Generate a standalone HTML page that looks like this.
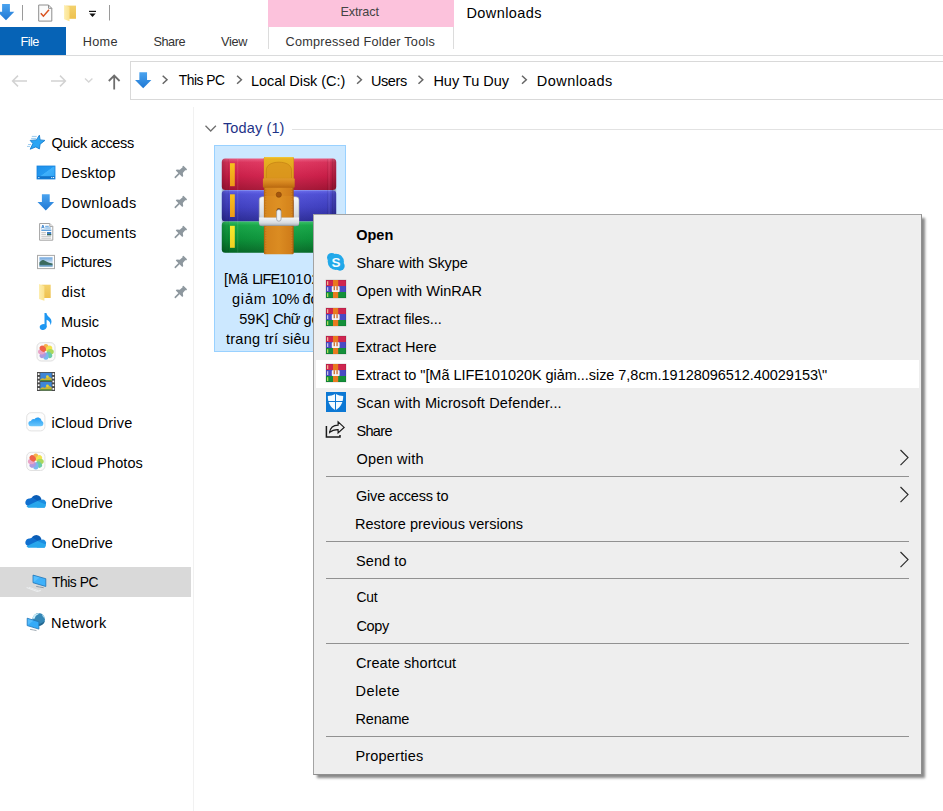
<!DOCTYPE html>
<html lang="en">
<head>
<meta charset="utf-8">
<title>Downloads</title>
<style>
*{box-sizing:border-box;margin:0;padding:0}
html,body{width:943px;height:811px;overflow:hidden;background:#fff}
body{font-family:"Liberation Sans",sans-serif;font-size:15px;color:#000;position:relative}
.a{position:absolute}
.t{position:absolute;white-space:nowrap;line-height:20px;height:20px}
svg{position:absolute;overflow:visible}
#pink{left:268px;top:0;width:186px;height:27px;background:#fcc2dc}
#filetab{left:0;top:27px;width:66px;height:28px;background:#0663b6}
#ribline{left:0;top:55px;width:943px;height:1px;background:#dadbdc}
#ctab{left:268px;top:27px;width:186px;height:22px;border-left:1px solid #dcdcdc;border-right:1px solid #dcdcdc;background:#fff}
#addr{left:130px;top:61px;width:830px;height:39px;border:1px solid #d9d9d9;background:#fff}
#navsel{left:0;top:567px;width:191px;height:30px;background:#d9d9d9}
#navdiv{left:193px;top:107px;width:1px;height:704px;background:#f1f1f1}
#grpline{left:292px;top:129px;width:651px;height:1px;background:#e2e2e2}
#sel{left:214px;top:145px;width:132px;height:207px;background:#cce8ff;border:1px solid #99d1ff}
#menu{left:313px;top:214px;width:609px;height:561px;background:#eeeeee;border:1px solid #a3a3a3;border-right-color:#8f8f8f;border-bottom-color:#8f8f8f;box-shadow:3px 3.5px 2.5px -.5px rgba(0,0,0,.47)}
#hl{left:316px;top:360px;width:603px;height:28px;background:#fff}
.sep{position:absolute;left:326px;width:583px;height:1px;background:#919191}
</style>
</head>
<body>
<div class="a" id="pink"></div>
<div class="a" id="ctab"></div>
<div class="a" id="filetab"></div>
<div class="a" id="ribline"></div>
<div class="a" id="addr"></div>
<div class="a" id="navsel"></div>
<div class="a" id="navdiv"></div>
<div class="a" id="grpline"></div>
<div class="a" id="sel"></div>

<!-- texts -->
<div class="t" style="left:340.4px;top:1.6px;font-size:12.7px;letter-spacing:-0.143px;color:#444">Extract</div>
<div class="t" style="left:466.4px;top:2.98px;font-size:14.5px;letter-spacing:0.427px;color:#000">Downloads</div>
<div class="t" style="left:20.5px;top:31.6px;font-size:12.7px;letter-spacing:-0.529px;color:#fff">File</div>
<div class="t" style="left:82.7px;top:31.6px;font-size:12.7px;letter-spacing:0.338px;color:#333">Home</div>
<div class="t" style="left:153.4px;top:31.6px;font-size:12.7px;letter-spacing:-0.425px;color:#333">Share</div>
<div class="t" style="left:220.9px;top:31.6px;font-size:12.7px;letter-spacing:-0.236px;color:#333">View</div>
<div class="t" style="left:285.6px;top:31.6px;font-size:12.7px;letter-spacing:0.222px;color:#333">Compressed Folder Tools</div>
<div class="t" style="left:178.8px;top:71.02px;font-size:13.8px;letter-spacing:-0.471px;color:#000">This PC</div>
<div class="t" style="left:251px;top:70.78px;font-size:14.5px;letter-spacing:-0.06px;color:#000">Local Disk (C:)</div>
<div class="t" style="left:371px;top:70.78px;font-size:14.5px;letter-spacing:-0.429px;color:#000">Users</div>
<div class="t" style="left:433.4px;top:70.78px;font-size:14.5px;letter-spacing:-0.018px;color:#000">Huy Tu Duy</div>
<div class="t" style="left:536.8px;top:70.78px;font-size:14.5px;letter-spacing:0.452px;color:#000">Downloads</div>
<div class="t" style="left:51.5px;top:132.68px;font-size:14.5px;letter-spacing:-0.316px;color:#000">Quick access</div>
<div class="t" style="left:61px;top:162.58px;font-size:14.5px;letter-spacing:0.212px;color:#000">Desktop</div>
<div class="t" style="left:61px;top:192.58px;font-size:14.5px;letter-spacing:0.427px;color:#000">Downloads</div>
<div class="t" style="left:61px;top:222.58px;font-size:14.5px;letter-spacing:0.227px;color:#000">Documents</div>
<div class="t" style="left:61px;top:252.48px;font-size:14.5px;letter-spacing:-0.218px;color:#000">Pictures</div>
<div class="t" style="left:61.4px;top:282.48px;font-size:14.5px;letter-spacing:0.321px;color:#000">dist</div>
<div class="t" style="left:61px;top:312.48px;font-size:14.5px;letter-spacing:0.046px;color:#000">Music</div>
<div class="t" style="left:61px;top:342.48px;font-size:14.5px;letter-spacing:0.001px;color:#000">Photos</div>
<div class="t" style="left:61.5px;top:372.48px;font-size:14.5px;letter-spacing:0.115px;color:#000">Videos</div>
<div class="t" style="left:51.4px;top:412.58px;font-size:14.5px;letter-spacing:0.172px;color:#000">iCloud Drive</div>
<div class="t" style="left:51.4px;top:452.58px;font-size:14.5px;letter-spacing:0.098px;color:#000">iCloud Photos</div>
<div class="t" style="left:51.4px;top:492.58px;font-size:14.5px;letter-spacing:0.017px;color:#000">OneDrive</div>
<div class="t" style="left:51.4px;top:532.58px;font-size:14.5px;letter-spacing:0.017px;color:#000">OneDrive</div>
<div class="t" style="left:52.0px;top:572.82px;font-size:13.8px;letter-spacing:-0.454px;color:#000">This PC</div>
<div class="t" style="left:51px;top:612.58px;font-size:14.5px;letter-spacing:0.345px;color:#000">Network</div>
<div class="t" style="left:223px;top:118.28px;font-size:14.5px;letter-spacing:0.123px;color:#1e3287">Today (1)</div>
<!-- shared defs -->
<svg width="0" height="0" style="left:0px;top:0px">
<defs>
<linearGradient id="gArrow" x1="0" y1="0" x2="0" y2="1"><stop offset="0" stop-color="#4aa3ef"/><stop offset="1" stop-color="#1f78d4"/></linearGradient>
<linearGradient id="gFolderB" x1="0" y1="0" x2="0" y2="1"><stop offset="0" stop-color="#f3d16d"/><stop offset="1" stop-color="#eec14f"/></linearGradient>
<linearGradient id="gFolderF" x1="0" y1="0" x2="1" y2="0"><stop offset="0" stop-color="#fdeeb0"/><stop offset="1" stop-color="#fbe28d"/></linearGradient>
<linearGradient id="gDesk" x1="0" y1="0" x2="1" y2="1"><stop offset="0" stop-color="#1f90ea"/><stop offset=".47" stop-color="#2399f0"/><stop offset=".5" stop-color="#3fb0fb"/><stop offset="1" stop-color="#2fa2f4"/></linearGradient>
<linearGradient id="gCloud" x1="0" y1="0" x2="0" y2="1"><stop offset="0" stop-color="#1f9af3"/><stop offset="1" stop-color="#6cc7fb"/></linearGradient>
<linearGradient id="gSky" x1="0" y1="0" x2="0" y2="1"><stop offset="0" stop-color="#6fa6de"/><stop offset=".6" stop-color="#d3e4f4"/><stop offset="1" stop-color="#e6eff8"/></linearGradient>
<g id="pin" fill="#8d979e"><g transform="rotate(45)"><rect x="-2.7" y="-8.4" width="5.4" height="1.7" rx=".5"/><path d="M-1.9-7h3.8l.3 4.2 2.4 1.9v1.3h-9.2v-1.3l2.4-1.9z"/><rect x="-.8" y="0" width="1.6" height="6.4" rx=".7"/></g></g>
<g id="dlarrow"><path d="M-3.9-8.1h7.8v7.7h4.4L0 8.1-8.3-.4h4.4z" fill="url(#gArrow)"/></g>
<g id="chev" fill="none" stroke="#666" stroke-width="1.5"><path d="M-2.5-4l4.3 4-4.3 4"/></g>
<g id="flower">
 <g opacity=".9">
 <ellipse cx="0" cy="-4.400" rx="2.700" ry="3.500" fill="#f5aa3c"/>
 <ellipse cx="0" cy="-4.400" rx="2.700" ry="3.500" fill="#f2e03c" transform="rotate(45)"/>
 <ellipse cx="0" cy="-4.400" rx="2.700" ry="3.500" fill="#a3d64c" transform="rotate(90)"/>
 <ellipse cx="0" cy="-4.400" rx="2.700" ry="3.500" fill="#5cc79f" transform="rotate(135)"/>
 <ellipse cx="0" cy="-4.400" rx="2.700" ry="3.500" fill="#6cb2ee" transform="rotate(180)"/>
 <ellipse cx="0" cy="-4.400" rx="2.700" ry="3.500" fill="#a88fdc" transform="rotate(225)"/>
 <ellipse cx="0" cy="-4.400" rx="2.700" ry="3.500" fill="#e79ac2" transform="rotate(270)"/>
 <ellipse cx="0" cy="-4.400" rx="2.700" ry="3.500" fill="#ee5236" transform="rotate(315)"/>
 </g>
</g>
<g id="onedrive">
 <circle cx="36.3" cy="500.1" r="5.2" fill="#0b5db6"/>
 <path d="M29.800 498.500a3.800 3.800 0 0 0-2.200 7.200l1.400 1.900 8.400-6.900-4.900-3.100z" fill="#106fcf"/>
 <path d="M37.400 500.700l4-.9a3.500 3.500 0 0 1 4.400 4.800l-1 3h-8z" fill="#1b8de0"/>
 <path d="M37.400 500.900l8.300 3.500c.4 1.900-.8 3.400-2.500 3.400h-14c-1.200 0-2.200-.6-2.700-1.500z" fill="#29a7ec"/>
</g>
</defs>
</svg>
<!-- quick access toolbar -->
<svg style="left:0px;top:0px" width="120" height="27">
 <use href="#dlarrow" transform="translate(6,12.2)"/>
 <rect x="22" y="5" width="1" height="15.5" fill="#9a9a9a"/>
 <rect x="109" y="5" width="1" height="15.5" fill="#9a9a9a"/>
 <path d="M38.7 5h9.8l3.3 3.3v12.8h-13.1z" fill="#fbfbfb" stroke="#8e8e8e" stroke-width="1"/>
 <path d="M48.5 5v3.3h3.3" fill="none" stroke="#8e8e8e" stroke-width="1"/>
 <path d="M40.8 13.2l2.6 3 5.6-6.4" fill="none" stroke="#d9521f" stroke-width="1.5"/>
 <path d="M66.2 5.6h9.8v13.2h-9.8z" fill="url(#gFolderB)"/>
 <path d="M64.1 5l5.4 1.8v14.4l-5.4-1.9z" fill="url(#gFolderF)"/>
 <rect x="89" y="10.8" width="7" height="1.2" fill="#111"/>
 <path d="M89.3 13.5h6.4l-3.2 3.4z" fill="#111"/>
</svg>
<!-- nav buttons -->
<svg style="left:0px;top:60px" width="180" height="40" fill="none">
 <path d="M27 21H12.6M18 15.6 12.6 21l5.4 5.4" stroke="#d2d2d2" stroke-width="1.5"/>
 <path d="M51 21h14.4M60 15.6l5.4 5.4-5.4 5.4" stroke="#d2d2d2" stroke-width="1.5"/>
 <path d="M85 18.4l3.7 3.6 3.7-3.6" stroke="#d6d6d6" stroke-width="1.4"/>
 <path d="M114.2 29.5V15.6M108.8 21l5.4-5.4 5.4 5.4" stroke="#6e6e6e" stroke-width="1.8"/>
 <use href="#dlarrow" transform="translate(143.2,20.3) scale(.985)"/>
 <use href="#chev" transform="translate(165.2,19.8)"/>
 <use href="#chev" transform="translate(239.6,19.8)"/>
 <use href="#chev" transform="translate(359.6,19.8)"/>
 <use href="#chev" transform="translate(421,19.8)"/>
 <use href="#chev" transform="translate(524.5,19.8)"/>
</svg>
<!-- nav pane icons -->
<svg style="left:0px;top:100px" width="192" height="560" viewBox="0 100 192 560">
 <!-- pins -->
 <use href="#pin" transform="translate(179.3,173.4)"/>
 <use href="#pin" transform="translate(179.3,203.4)"/>
 <use href="#pin" transform="translate(179.3,233.4)"/>
 <use href="#pin" transform="translate(179.3,263.4)"/>
 <use href="#pin" transform="translate(179.3,293.4)"/>
 <!-- quick access star -->
 <path d="M39.4 135.2 40.1 139.9 44.9 140.4 40.1 144.2 39.4 148.9 35.8 146.9 30.2 149.2 32.9 143.6 30.2 140.4 36.4 139.9z" fill="#2aa5f4" stroke="#1a7fcf" stroke-width=".9" stroke-linejoin="round"/>
 <path d="M31.8 136.4h4.9M31.1 138.4h4.9M28.100 144.500h3M27 146.400h3" stroke="#9ccbee" stroke-width="1" fill="none"/>
 <!-- desktop -->
 <rect x="37" y="166" width="18" height="13" fill="url(#gDesk)"/>
 <rect x="37" y="176.2" width="18" height="2.8" fill="#1273c9"/>
 <rect x="37" y="166" width="18" height="13" fill="none" stroke="#1680dc" stroke-width=".8"/>
 <rect x="38.3" y="177" width="1.1" height="1.1" fill="#e8f4ff"/><rect x="51.2" y="177" width="1.1" height="1.1" fill="#e8f4ff"/><rect x="53" y="177" width="1.1" height="1.1" fill="#e8f4ff"/>
 <!-- downloads -->
 <use href="#dlarrow" transform="translate(45.8,202.4)"/>
 <!-- documents -->
 <path d="M39.6 223.5h10.2l3 3v13.7h-13.2z" fill="#fdfdfd" stroke="#a3a3a3" stroke-width="1"/>
 <path d="M49.8 223.5v3h3" fill="#e9e9e9" stroke="#a3a3a3" stroke-width=".9"/>
 <path d="M41.6 228.4l1.3-3.4 1.3 3.4M42 227.3h1.8" stroke="#2a78c8" stroke-width=".8" fill="none"/>
 <path d="M45.2 226.3h3.6M45.2 228h5.6" stroke="#4a97dc" stroke-width=".9"/>
 <path d="M41.3 230.2h10" stroke="#2f83d2" stroke-width="1.1"/>
 <path d="M41.3 232.6h4.6M41.3 234.4h4.6M41.3 236.3h9.8M41.3 238.2h9.8" stroke="#b4b4b4" stroke-width=".8"/>
 <rect x="47" y="232" width="4.2" height="3.2" fill="#3d7fc1"/><rect x="47" y="234" width="4.2" height="1.2" fill="#3f6a52"/>
 <!-- pictures -->
 <rect x="37.5" y="255.4" width="17" height="13.2" fill="#fdfdfd" stroke="#a9a9a9" stroke-width="1"/>
 <rect x="39.4" y="257.3" width="13.2" height="9.4" fill="url(#gSky)"/>
 <path d="M39.400 262.600c1.600-2.300 3-3 4.600-2.300 2.600 1.300 5 2.700 8.600 3.300v1.700h-13.200z" fill="#3b6a5e"/>
 <rect x="39.400" y="264.900" width="13.200" height="1.800" fill="#6a9cc0"/>
 <!-- dist folder -->
 <path d="M41.4 284.7h9.3v13.3h-9.3z" fill="url(#gFolderB)"/>
 <path d="M39 284.1l5.4 1.8v14.9L39 298.9z" fill="url(#gFolderF)"/>
 <!-- music -->
 <path d="M44.500 313h1.900c.500 2.200 1.900 3.400 3.400 4.800 2 1.900 2.300 4.800.500 7.500.300-2.700-.700-4.600-3.700-5.600v7.400h-2.100z" fill="#1e97f2"/>
 <ellipse cx="43.200" cy="327" rx="3.500" ry="2.800" fill="#1e97f2" transform="rotate(-20 43.200 327)"/>
 <!-- photos -->
 <rect x="37" y="342.700" width="18" height="18.300" rx="4.200" fill="#fafafa" stroke="#dedede" stroke-width="1"/>
 <use href="#flower" transform="translate(45.900,351.800)"/>
 <!-- videos -->
 <rect x="37" y="372" width="18" height="19" fill="#4a4a4a"/>
 <rect x="40.3" y="372.8" width="11.4" height="8.3" fill="#3d86d8"/>
 <rect x="40.3" y="382" width="11.4" height="8.3" fill="#3d86d8"/>
 <path d="M40.3 379.3c2-1.5 3-1.4 4.7-.4 1.6-2.8 4.2-3 6.7-.5v2.7h-11.4z" fill="#c9b437"/>
 <path d="M40.3 388.5c2-1.5 3-1.4 4.7-.4 1.6-2.8 4.2-3 6.7-.5v2.7h-11.4z" fill="#c9b437"/>
 <rect x="40.3" y="380" width="11.4" height="1.1" fill="#4c8a3a"/><rect x="40.3" y="389.2" width="11.4" height="1.1" fill="#4c8a3a"/>
 <circle cx="47.4" cy="376.6" r="1.4" fill="#e0d23a"/><circle cx="47.4" cy="385.8" r="1.4" fill="#e0d23a"/>
 <g fill="#fff"><rect x="37.8" y="373.2" width="1.7" height="1.8"/><rect x="37.8" y="376.9" width="1.7" height="1.8"/><rect x="37.8" y="380.6" width="1.7" height="1.8"/><rect x="37.8" y="384.3" width="1.7" height="1.8"/><rect x="37.8" y="388" width="1.7" height="1.8"/>
 <rect x="52.5" y="373.2" width="1.7" height="1.8"/><rect x="52.5" y="376.9" width="1.7" height="1.8"/><rect x="52.5" y="380.6" width="1.7" height="1.8"/><rect x="52.5" y="384.3" width="1.7" height="1.8"/><rect x="52.5" y="388" width="1.7" height="1.8"/></g>
 <!-- icloud drive -->
 <rect x="26.7" y="412.7" width="18.2" height="18.2" rx="4.4" fill="#fdfdfd" stroke="#e3e3e3" stroke-width="1"/>
 <path d="M31.2 426.3a2.7 2.7 0 0 1-.3-5.4 3 3 0 0 1 3.4-1.7 4.1 4.1 0 0 1 7.4 1.9 2.7 2.7 0 0 1-.7 5.2z" fill="url(#gCloud)"/>
 <!-- icloud photos -->
 <rect x="26.7" y="452.3" width="18.2" height="18.2" rx="4.4" fill="#fbfbfb" stroke="#e1e1e1" stroke-width="1"/>
 <use href="#flower" transform="translate(35.800,461.500)"/>
 <!-- onedrive x2 -->
 <use href="#onedrive"/>
 <use href="#onedrive" transform="translate(0,40)"/>
 <!-- this pc -->
 <path d="M33 575.100l12.800 3.600v7.800l-12.800-3.800z" fill="#3fb1fa" stroke="#1f74b6" stroke-width=".8" stroke-linejoin="round"/>
 <path d="M33.600 575.900l6 1.700-6 4.600z" fill="#63c3fd" fill-opacity=".7"/>
 <path d="M36.200 586.400l3.200.6 4.300.700" stroke="#8794a0" stroke-width=".9" fill="none"/>
 <path d="M26.600 587.600l10.600 3.900 3.600-1.100" stroke="#eceeef" stroke-width="1.100" fill="none"/>
 <path d="M29 587.300l9 3.200" stroke="#e9ebed" stroke-width="1" fill="none"/>
 <!-- network -->
 <circle cx="38.700" cy="619.400" r="6.300" fill="#3587b6"/>
 <path d="M44.800 621a6.300 6.300 0 0 1-10 3.600c4 .2 8-1.600 10-3.600z" fill="#25668e"/>
 <path d="M33.200 616.300c1.500-2.300 3.900-3.400 6.500-3.100-1.300 1.300-2.900 1.500-3.900 2.900-.7 1.100-.7 2.300-1.900 3.200-.9-.7-1.200-1.800-.7-3z" fill="#c9ecf8"/>
 <path d="M42.300 614.700c1.400.9 2.300 2.300 2.600 3.900-.9-.3-1.300-1.200-1.900-2-.5-.6-.9-1.100-.7-1.900z" fill="#bfe6f5"/>
 <path d="M27.200 618.200l11.700 3.600v7.300l-11.700-3.500z" fill="#36abf8" stroke="#1f74b6" stroke-width=".8" stroke-linejoin="round"/>
 <path d="M27.800 619l5.600 1.700-5.600 4.200z" fill="#63c3fd" fill-opacity=".7"/>
 <path d="M30.100 629.400l3 .5 3.400.7" stroke="#9aa5ae" stroke-width=".9" fill="none"/>
</svg>
<!-- group header chevron -->
<svg style="left:200px;top:120px" width="20" height="16"><path d="M5.500 5.800l5.200 5.200 5.200-5.200" fill="none" stroke="#6f6f6f" stroke-width="1.300"/></svg>
<!-- big winrar icon -->
<svg style="left:214px;top:150px" width="132" height="110" viewBox="214 150 132 110">
<defs>
<linearGradient id="bR" x1="0" y1="0" x2="0" y2="1"><stop offset="0" stop-color="#f05f86"/><stop offset=".12" stop-color="#e2345f"/><stop offset=".55" stop-color="#d21f4b"/><stop offset="1" stop-color="#a81536"/></linearGradient>
<linearGradient id="bB" x1="0" y1="0" x2="0" y2="1"><stop offset="0" stop-color="#6a6cf0"/><stop offset=".12" stop-color="#5152dc"/><stop offset=".55" stop-color="#4141c6"/><stop offset="1" stop-color="#2b2b98"/></linearGradient>
<linearGradient id="bG" x1="0" y1="0" x2="0" y2="1"><stop offset="0" stop-color="#35c266"/><stop offset=".12" stop-color="#16aa49"/><stop offset=".55" stop-color="#0a9539"/><stop offset="1" stop-color="#056a26"/></linearGradient>
<linearGradient id="bEnd" x1="0" y1="0" x2="1" y2="0"><stop offset="0" stop-color="#000" stop-opacity=".22"/><stop offset=".06" stop-color="#000" stop-opacity=".05"/><stop offset=".5" stop-color="#fff" stop-opacity=".04"/><stop offset=".94" stop-color="#000" stop-opacity=".05"/><stop offset="1" stop-color="#000" stop-opacity=".25"/></linearGradient>
<linearGradient id="belt" x1="0" y1="0" x2="1" y2="0"><stop offset="0" stop-color="#b2620e"/><stop offset=".1" stop-color="#d4831d"/><stop offset=".5" stop-color="#db8c22"/><stop offset=".9" stop-color="#d07d1a"/><stop offset="1" stop-color="#a8590b"/></linearGradient>
<linearGradient id="beltTop" x1="0" y1="0" x2="0" y2="1"><stop offset="0" stop-color="#f3cb3a"/><stop offset=".08" stop-color="#e8b222"/><stop offset="1" stop-color="#dc9a1e"/></linearGradient>
<linearGradient id="loop" x1="0" y1="0" x2="0" y2="1"><stop offset="0" stop-color="#e29a2a"/><stop offset=".5" stop-color="#d3831d"/><stop offset="1" stop-color="#b8680f"/></linearGradient>
<linearGradient id="silver" x1="0" y1="0" x2="0" y2="1"><stop offset="0" stop-color="#f4f6f8"/><stop offset=".6" stop-color="#d9dde2"/><stop offset="1" stop-color="#aeb4bc"/></linearGradient>
<linearGradient id="stripe" x1="0" y1="0" x2="0" y2="1"><stop offset="0" stop-color="#f6c21c"/><stop offset="1" stop-color="#ee9a1a"/></linearGradient>
<linearGradient id="stripeG" x1="0" y1="0" x2="0" y2="1"><stop offset="0" stop-color="#f4ea2c"/><stop offset="1" stop-color="#f1cf22"/></linearGradient>
</defs>
<!-- books -->
<rect x="221.800" y="158.500" width="114.400" height="31.400" rx="3.500" fill="url(#bR)"/>
<rect x="221.800" y="190.300" width="114.400" height="31.300" rx="3.500" fill="url(#bB)"/>
<rect x="221.800" y="221.600" width="114.400" height="31.200" rx="3.500" fill="url(#bG)"/>
<rect x="221.800" y="158.500" width="114.400" height="94.300" rx="3.500" fill="url(#bEnd)"/>
<g stroke="#000" stroke-opacity=".13" stroke-width=".8"><path d="M228.300 159v93.500M327.800 159v93.500M332.400 159v93.500"/></g>
<g stroke="#fff" stroke-opacity=".13" stroke-width=".8"><path d="M237.800 159v93.500M329 159v93.500"/></g>
<rect x="230" y="163.200" width="4.800" height="23" fill="url(#stripe)"/>
<rect x="230" y="194.300" width="4.800" height="22.700" fill="url(#stripe)"/>
<rect x="230" y="225.800" width="4.800" height="22" fill="url(#stripeG)"/>
<!-- buckle back -->
<rect x="259.200" y="196.700" width="39.800" height="29.100" rx="3.200" fill="url(#silver)" stroke="#9aa0a8" stroke-width=".6"/>
<rect x="264.600" y="200" width="29" height="17.600" rx="1" fill="#3b3bb8"/>
<!-- belt -->
<rect x="263.900" y="157" width="29.800" height="97.200" rx="1.200" fill="url(#belt)"/>
<path d="M263.900 158.200a1.200 1.200 0 0 1 1.200-1.200h27.400a1.200 1.200 0 0 1 1.200 1.200v20.200h-29.800z" fill="url(#beltTop)"/>
<path d="M266.300 178.400v-8c0-5.600 5.600-8.200 12.600-8.200s12.600 2.600 12.600 8.200v8z" fill="#d9941c" fill-opacity=".75" stroke="#c27f12" stroke-width=".8" stroke-opacity=".8"/>
<g stroke="#f6d58a" stroke-opacity=".32" stroke-width=".7" stroke-dasharray="1.400 1.200" fill="none"><path d="M265.800 188v65.500M291.800 188v65.500"/></g>
<rect x="263.900" y="196" width="29.800" height="22" fill="#f0a52c" fill-opacity=".18"/>
<path d="M264.200 217.600h29.200" stroke="#9a5208" stroke-opacity=".6" stroke-width=".8"/>
<!-- loop -->
<rect x="262.900" y="178.300" width="31.800" height="9.400" rx="1.200" fill="url(#loop)"/>
<!-- hole -->
<circle cx="278.800" cy="194.700" r="2.600" fill="#a4560d"/><circle cx="278.800" cy="194.700" r="2.600" fill="none" stroke="#8a4608" stroke-width=".6"/><circle cx="278.800" cy="210.600" r="2.300" fill="#6b3506"/>
<!-- buckle front bar & prong -->
<path d="M259.200 217.500h39.800v5.100a3.200 3.200 0 0 1-3.200 3.200h-33.400a3.200 3.200 0 0 1-3.200-3.200z" fill="url(#silver)"/>
<path d="M259.500 225.400h39.200" stroke="#8f959d" stroke-width=".7"/>
<rect x="276.600" y="209.600" width="4.500" height="11.600" rx="2.200" fill="#eef1f4" stroke="#9097a0" stroke-width=".7"/>
</svg>

<!-- file label -->
<div class="t" style="left:224px;top:268.8px;font-size:14.5px">[Mã <span style="letter-spacing:-.9px">LIFE</span>101020K</div>
<div class="t" style="left:232px;top:288.9px;font-size:14.5px"><span style="letter-spacing:.8px">giảm </span><span style="letter-spacing:-.5px">10% </span>đơn</div>
<div class="t" style="left:239.3px;top:308.5px;font-size:14.5px">59K] <span style="letter-spacing:-.5px">Chữ </span>gỗ</div>
<div class="t" style="left:226px;top:328.7px;font-size:14.5px;letter-spacing:.25px">trang trí siêu xinh</div>

<!-- context menu -->
<div class="a" id="menu"></div>
<div class="a" id="hl"></div>
<div class="t" style="left:356.3px;top:224.58px;font-size:14.5px;letter-spacing:-0.033px;color:#000;font-weight:700">Open</div>
<div class="t" style="left:356.5px;top:252.68px;font-size:14.5px;letter-spacing:-0.105px;color:#000">Share with Skype</div>
<div class="t" style="left:356.5px;top:280.68px;font-size:14.5px;letter-spacing:0.038px;color:#000">Open with WinRAR</div>
<div class="t" style="left:355.5px;top:308.68px;font-size:14.5px;letter-spacing:-0.053px;color:#000">Extract files...</div>
<div class="t" style="left:355.5px;top:336.68px;font-size:14.5px;letter-spacing:0.044px;color:#000">Extract Here</div>
<div class="t" style="left:355.5px;top:364.68px;font-size:14.5px;letter-spacing:-0.045px;color:#000">Extract to "[Mã LIFE101020K giảm...size 7,8cm.19128096512.40029153\"</div>
<div class="t" style="left:356.5px;top:392.78px;font-size:14.5px;letter-spacing:0.149px;color:#000">Scan with Microsoft Defender...</div>
<div class="t" style="left:356.5px;top:420.78px;font-size:14.5px;letter-spacing:-0.682px;color:#000">Share</div>
<div class="t" style="left:356.5px;top:448.78px;font-size:14.5px;letter-spacing:0.222px;color:#000">Open with</div>
<div class="t" style="left:356px;top:485.78px;font-size:14.5px;letter-spacing:-0.202px;color:#000">Give access to</div>
<div class="t" style="left:355px;top:513.78px;font-size:14.5px;letter-spacing:0.018px;color:#000">Restore previous versions</div>
<div class="t" style="left:356px;top:550.78px;font-size:14.5px;letter-spacing:0.096px;color:#000">Send to</div>
<div class="t" style="left:356.5px;top:588.02px;font-size:13.8px;letter-spacing:-0.224px;color:#000">Cut</div>
<div class="t" style="left:356.5px;top:615.78px;font-size:14.5px;letter-spacing:-0.367px;color:#000">Copy</div>
<div class="t" style="left:356px;top:652.88px;font-size:14.5px;letter-spacing:0.071px;color:#000">Create shortcut</div>
<div class="t" style="left:355.5px;top:680.88px;font-size:14.5px;letter-spacing:0.45px;color:#000">Delete</div>
<div class="t" style="left:355.5px;top:708.88px;font-size:14.5px;letter-spacing:-0.189px;color:#000">Rename</div>
<div class="t" style="left:355.5px;top:745.88px;font-size:14.5px;letter-spacing:0.185px;color:#000">Properties</div>
<div class="sep" style="top:476px"></div>
<div class="sep" style="top:541px"></div>
<div class="sep" style="top:578px"></div>
<div class="sep" style="top:643px"></div>
<div class="sep" style="top:736px"></div>
<!-- menu icons -->
<svg style="left:320px;top:248px" width="30" height="200" viewBox="320 248 30 200">
<defs>
<g id="rar">
 <rect x="0" y="0" width="20" height="6" fill="#cf2550"/>
 <rect x="0" y="6" width="20" height="6" fill="#4a4ac4"/>
 <rect x="0" y="12" width="20" height="6" fill="#14903a"/>
 <rect x="0" y="0" width="20" height="18" fill="none" stroke="#000" stroke-opacity=".18" stroke-width=".8"/>
 <rect x="1.200" y="1.200" width="1" height="3.800" fill="#fbd9a0"/><rect x="1.200" y="7.200" width="1" height="3.800" fill="#e8e0f0"/><rect x="1.200" y="13.200" width="1" height="3.800" fill="#d8ee60"/>
 <rect x="7" y="0" width="5.200" height="18" fill="#e97a1f"/>
 <rect x="5.800" y="6.200" width="7.800" height="5.800" rx=".8" fill="#f6f3f4"/>
 <rect x="7.600" y="6.200" width="1.300" height="4" fill="#c96a28"/><rect x="10.400" y="6.200" width="1.300" height="4" fill="#c96a28"/>
</g>
</defs>
<!-- skype -->
<circle cx="331.700" cy="257.600" r="4.700" fill="#1fa6e8"/>
<circle cx="340" cy="266" r="4.700" fill="#1fa6e8"/>
<circle cx="335.800" cy="261.800" r="8.100" fill="#22a9ea"/>
<text x="335.900" y="266.700" text-anchor="middle" font-family="Liberation Sans, sans-serif" font-weight="700" font-size="13.500" fill="#f4fbff">S</text>
<use href="#rar" transform="translate(326,280)"/>
<use href="#rar" transform="translate(326,308)"/>
<use href="#rar" transform="translate(326,336)"/>
<use href="#rar" transform="translate(326,364)"/>
<!-- defender -->
<rect x="326" y="392" width="20" height="20" fill="#0c78d4"/>
<path d="M335.500 393.800c2.600 1.500 5.100 2.100 7.700 2.200 0 6.700-2.600 11.400-7.700 14.200-5.100-2.800-7.700-7.500-7.700-14.200 2.600-.1 5.100-.7 7.700-2.200z" fill="#f3fbff"/>
<path d="M335.500 393.500v17M327.500 401.500h16.500" stroke="#0c78d4" stroke-width="1"/>
<!-- share -->
<path d="M326.400 426v11h13.600v-2" fill="none" stroke="#1a1a1a" stroke-width="1.500"/>
<path d="M329.700 432.400c.5-4.300 3.600-7 8.400-7.200v-3.300l6 5.500-6 5.500v-3.300c-3.800-.1-6.300.8-8.400 2.800z" fill="none" stroke="#1a1a1a" stroke-width="1.200" stroke-linejoin="miter"/>
</svg>
<!-- submenu arrows -->
<svg style="left:895px;top:445px" width="20" height="130" viewBox="895 445 20 130" fill="none" stroke="#2b2b2b" stroke-width="1.200">
<path d="M900.500 450l7.500 7.600-7.500 7.600"/>
<path d="M900.500 487l7.500 7.600-7.500 7.600"/>
<path d="M900.500 552l7.500 7.600-7.500 7.600"/>
</svg>

</body>
</html>
